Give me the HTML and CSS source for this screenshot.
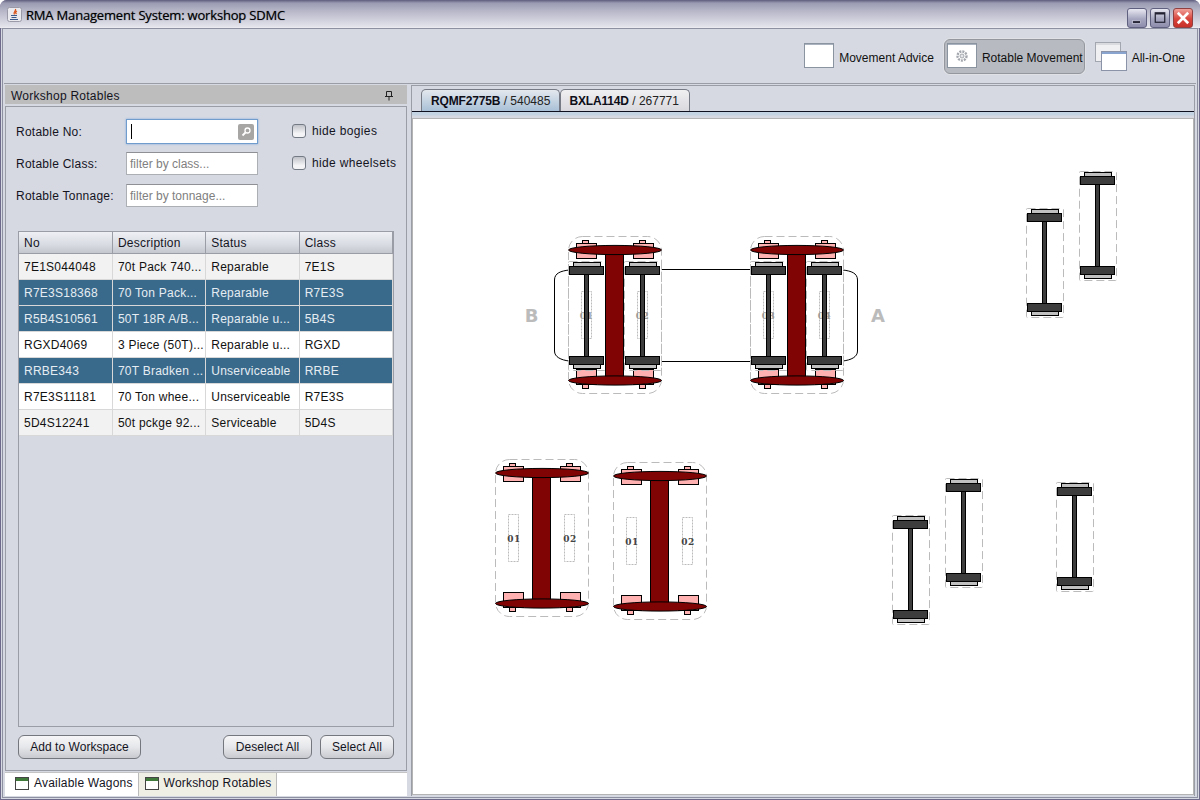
FILE: index.html
```html
<!DOCTYPE html>
<html lang="en">
<head>
<meta charset="utf-8">
<title>RMA Management System: workshop SDMC</title>
<link rel="stylesheet" href="styles.css">
</head>
<body>
<div class="window">
  <header class="titlebar">
    <svg class="app-icon" width="15" height="15" viewBox="0 0 15 15"><rect x="0.5" y="0.5" width="14" height="14" rx="2" fill="#e9e9ee" stroke="#9a9aa8"/><path d="M8.500 2c1 2-3 3-1 5.500M10 4c-2 1-1.500 2-.5 3" fill="none" stroke="#d8551c" stroke-width="1.300"/><path d="M4 8.500h6M4.500 10.500h5M3 12.500h8" stroke="#3a5a8c" stroke-width="1"/></svg>
    <span class="title">RMA Management System: workshop SDMC</span>
    <div class="win-buttons">
      <div class="win-btn"><svg width="19" height="20" viewBox="0 0 19 20"><rect x="5" y="13" width="8" height="2.500" fill="#223" stroke="#eef" stroke-width=".5"/></svg></div>
      <div class="win-btn"><svg width="19" height="20" viewBox="0 0 19 20"><rect x="4.500" y="4.500" width="10" height="10" fill="none" stroke="#223" stroke-width="1.300"/><path d="M4.500 5.500h10" stroke="#223" stroke-width="1.500"/></svg></div>
      <div class="win-btn win-close"><svg width="19" height="20" viewBox="0 0 19 20"><path d="M4 4.500l11 11M15 4.500l-11 11" stroke="#fff" stroke-width="2.800"/></svg></div>
    </div>
  </header>
  <div class="frame">
    <nav class="toolbar">
      <div class="tool">
        <svg class="tool-icon icon-up" width="30" height="25" viewBox="0 0 30 25"><rect x="0.500" y="0.500" width="29" height="24" fill="#fff" stroke="#8a93a0"/><path d="M1 1.500h28" stroke="#aab2c0"/></svg>
        <span>Movement Advice</span>
      </div>
      <div class="tool tool-active">
        <svg class="tool-icon icon-up" width="30" height="25" viewBox="0 0 30 25"><rect x="0.500" y="0.500" width="29" height="24" fill="#fff" stroke="#8a93a0"/><path d="M1 1.500h28" stroke="#aab2c0"/><circle cx="15" cy="13" r="4.500" fill="none" stroke="#a4a8ae" stroke-width="2.400" stroke-dasharray="2 1"/><circle cx="15" cy="13" r="2" fill="#e4e6ea" stroke="#a4a8ae"/></svg>
        <span>Rotable Movement</span>
      </div>
      <div class="tool">
        <svg class="tool-icon" width="32" height="29" viewBox="0 0 32 29"><rect x="0.500" y="0.500" width="25" height="19" fill="#f0f0f2" stroke="#a2a6ae"/><path d="M1 2h24" stroke="#c4c6cc"/><rect x="6.500" y="9.500" width="25" height="19" fill="#fff" stroke="#8a93a8"/><path d="M7 11h24" stroke="#8aa4d0" stroke-width="2"/></svg>
        <span>All-in-One</span>
      </div>
    </nav>
    <div class="main">
      <aside class="left">
        <div class="panel-head"><span>Workshop Rotables</span>
          <svg width="8" height="11" viewBox="0 0 8 11"><path d="M1.500 1.500h5v5h-5zM0 6.500h8M4 6.500v4" fill="none" stroke="#222"/></svg>
        </div>
        <div class="panel-body">
          <div class="form">
            <div class="form-col">
              <div class="form-row">
                <label class="lbl">Rotable No:</label>
                <div class="input input-focus"><i class="caret"></i>
                  <span class="search"><svg width="16" height="16" viewBox="0 0 16 16"><circle cx="9.500" cy="6.500" r="2.500" fill="none" stroke="#fff" stroke-width="1.300"/><path d="M7.500 8.500l-3 3" stroke="#fff" stroke-width="1.800"/></svg></span>
                </div>
              </div>
              <div class="form-row"><label class="lbl">Rotable Class:</label><div class="input">filter by class...</div></div>
              <div class="form-row"><label class="lbl">Rotable Tonnage:</label><div class="input">filter by tonnage...</div></div>
            </div>
            <div class="check-col">
              <div class="check-row"><i class="check"></i><span>hide bogies</span></div>
              <div class="check-row"><i class="check"></i><span>hide wheelsets</span></div>
            </div>
          </div>
          <div class="table-wrap">
            <table class="grid">
              <thead><tr><th>No</th><th>Description</th><th>Status</th><th>Class</th></tr></thead>
              <tbody>
                <tr class="alt"><td>7E1S044048</td><td>70t Pack 740...</td><td>Reparable</td><td>7E1S</td></tr>
                <tr class="sel"><td>R7E3S18368</td><td>70 Ton Pack...</td><td>Reparable</td><td>R7E3S</td></tr>
                <tr class="sel"><td>R5B4S10561</td><td>50T 18R A/B...</td><td>Reparable u...</td><td>5B4S</td></tr>
                <tr><td>RGXD4069</td><td>3 Piece (50T)...</td><td>Reparable u...</td><td>RGXD</td></tr>
                <tr class="sel"><td>RRBE343</td><td>70T Bradken ...</td><td>Unserviceable</td><td>RRBE</td></tr>
                <tr><td>R7E3S11181</td><td>70 Ton whee...</td><td>Unserviceable</td><td>R7E3S</td></tr>
                <tr class="alt"><td>5D4S12241</td><td>50t pckge 92...</td><td>Serviceable</td><td>5D4S</td></tr>
              </tbody>
            </table>
          </div>
          <div class="actions">
            <button class="btn btn-add">Add to Workspace</button>
            <button class="btn btn-desel">Deselect All</button>
            <button class="btn btn-sel">Select All</button>
          </div>
        </div>
        <div class="dock-tabs">
          <div class="dock-tab"><svg width="14" height="13" viewBox="0 0 14 13"><rect x=".5" y=".5" width="13" height="12" fill="#fff" stroke="#444"/><rect x="1" y="1" width="12" height="3" fill="#3f7a3a"/></svg><span>Available Wagons</span></div>
          <div class="dock-tab dock-tab-on"><svg width="14" height="13" viewBox="0 0 14 13"><rect x=".5" y=".5" width="13" height="12" fill="#fff" stroke="#444"/><rect x="1" y="1" width="12" height="3" fill="#3f7a3a"/></svg><span>Workshop Rotables</span></div>
        </div>
      </aside>
      <section class="right">
        <div class="tabs">
          <div class="tab tab-on"><b>RQMF2775B</b> / 540485</div>
          <div class="tab tab-next"><b>BXLA114D</b> / 267771</div>
        </div>
        <div class="tab-band">
          <div class="canvas">
            <svg class="diagram" width="780" height="674" viewBox="413 119 780 674">
              <defs>
                <g id="wheelset">
                  <rect x="0" y="0" width="37" height="109" rx="1" class="dash"/>
                  <rect x="5" y="1" width="27" height="4" class="grey"/>
                  <rect x="1" y="5" width="34" height="8" class="dark"/>
                  <rect x="16" y="13" width="4" height="82" class="dark"/>
                  <rect x="1" y="95" width="34" height="8" class="dark"/>
                  <rect x="5" y="103" width="27" height="4" class="grey"/>
                </g>
                <g id="frame">
                  <rect x="0" y="0" width="93" height="157" rx="14" class="dash"/>
                  <rect x="13" y="55" width="10" height="47" class="dots"/>
                  <rect x="69" y="55" width="10" height="47" class="dots"/>
                  <rect x="14" y="4" width="6" height="8" class="pink"/>
                  <rect x="71" y="4" width="6" height="8" class="pink"/>
                  <rect x="8" y="7" width="20" height="15" class="pink"/>
                  <rect x="65" y="7" width="20" height="15" class="pink"/>
                  <rect x="14" y="146" width="6" height="6" class="pink"/>
                  <rect x="71" y="146" width="6" height="6" class="pink"/>
                  <rect x="8" y="133" width="20" height="15" class="pink"/>
                  <rect x="65" y="133" width="20" height="15" class="pink"/>
                </g>
                <g id="beam">
                  <rect x="37" y="16" width="18" height="125" class="maroon"/>
                  <ellipse cx="46.500" cy="13.500" rx="46.500" ry="4.600" class="maroon"/>
                  <ellipse cx="46.500" cy="144" rx="46.500" ry="4.600" class="maroon"/>
                </g>
              </defs>
              <path class="wagon" d="M569 270C561 271 554.500 273 554.500 280V351C554.500 357 561 360 569 361M661 269.500H751M661 361.500H751M843 270C851 271 857.500 273 857.500 280V351C857.500 357 851 360 843 361"/>
              <text x="531.500" y="322" class="end">B</text>
              <text x="878" y="322" class="end">A</text>
              <use href="#frame" x="568.500" y="236.500"/>
              <use href="#frame" x="750.500" y="236.500"/>
              <text x="586.500" y="319" class="num num-faint">01</text>
              <text x="642.500" y="319" class="num num-faint">02</text>
              <text x="768.500" y="319" class="num num-faint">03</text>
              <text x="824.500" y="319" class="num num-faint">04</text>
              <use href="#wheelset" x="568.500" y="261.500"/>
              <use href="#wheelset" x="624.500" y="261.500"/>
              <use href="#wheelset" x="750.500" y="261.500"/>
              <use href="#wheelset" x="806.500" y="261.500"/>
              <use href="#beam" x="568.500" y="236.500"/>
              <use href="#beam" x="750.500" y="236.500"/>
              <use href="#frame" x="495.500" y="459.500"/>
              <use href="#beam" x="495.500" y="459.500"/>
              <text x="514" y="542" class="num">01</text>
              <text x="570" y="542" class="num">02</text>
              <use href="#frame" x="613.500" y="462.500"/>
              <use href="#beam" x="613.500" y="462.500"/>
              <text x="632" y="545" class="num">01</text>
              <text x="688" y="545" class="num">02</text>
              <use href="#wheelset" x="1026.500" y="208.500"/>
              <use href="#wheelset" x="1079.500" y="171.500"/>
              <use href="#wheelset" x="892.500" y="515.500"/>
              <use href="#wheelset" x="945.500" y="478.500"/>
              <use href="#wheelset" x="1056.500" y="482.500"/>
            </svg>
          </div>
        </div>
      </section>
    </div>
  </div>
</div>
</body>
</html>
```
FILE: styles.css
```css
html, body { margin: 0; padding: 0; background: #fff; }
body { width: 1200px; height: 800px; overflow: hidden; font: 12px "Liberation Sans", Arial, sans-serif; color: #111; }
.window { box-sizing: border-box; width: 1200px; height: 800px; display: flex; flex-direction: column; border-radius: 7px 7px 0 0; background: #6d6a8c; overflow: hidden; }
.titlebar { height: 28px; flex: none; display: flex; align-items: center; padding: 1px 7px 0 7px; box-sizing: border-box; background: linear-gradient(#5d5d7c 0, #9a9ab2 3px, #b4b4c6 10px, #e4e4ec 27px, #f0f0f4 28px); }
.app-icon { flex: none; }
.title { margin-left: 4px; font: 13px "Open Sans", sans-serif; letter-spacing: -.18px; color: #000; text-shadow: 0 0 1px #556; }
.win-buttons { margin-left: auto; display: flex; gap: 3px; padding-top: 6px; }
.win-btn { width: 20px; height: 20px; border-radius: 3px; border: 1px solid #5f5f80; box-sizing: border-box; background: linear-gradient(#e8e8f2, #a6a6c0 55%, #8e8eac); display: flex; align-items: center; justify-content: center; overflow: hidden; }
.win-close { background: linear-gradient(#f0a09a, #d8453c 55%, #c83028); border-color: #904040; }
.frame { flex: 1; min-height: 0; display: flex; flex-direction: column; background: #d6d9e2; margin: 0 1px 1px; padding: 0 2px 2px; border: 1px solid #d6d9e2; border-top: 1px solid #8d90a0; box-shadow: inset 1px 0 0 #8d90a0, inset -1px 0 0 #8d90a0, inset 0 -1px 0 #8d90a0; }
.toolbar { height: 54px; flex: none; display: flex; justify-content: flex-end; align-items: center; gap: 10px; padding: 0 11px 0 0; border-bottom: 1px solid #9a9da6; }
.tool { height: 35px; display: flex; align-items: center; gap: 5px; box-sizing: border-box; color: #111; white-space: nowrap; }
.tool span { margin-top: 4px; }
.tool-icon { flex: none; }
.icon-up { margin-bottom: 2px; }
.tool-active { background: #b7bac0; border: 1px solid #94979e; border-radius: 6px; padding: 0 1px 0 2px; box-shadow: 0 0 0 1px #dfe1e6; }
.main { flex: 1; min-height: 0; display: flex; gap: 4px; padding-top: 1px; }
.left { width: 402px; flex: none; margin-left: 1px; display: flex; flex-direction: column; }
.panel-head { height: 19px; flex: none; box-sizing: border-box; padding: 2px 14px 0 6px; background: #bdbdbd; display: flex; align-items: center; justify-content: space-between; margin-bottom: 2px; color: #14141e; letter-spacing: .25px; }
.panel-body { flex: 1; min-height: 0; box-sizing: border-box; border: 1px solid #9a9da6; display: flex; flex-direction: column; padding: 13px 12px 11px; }
.form { height: 111px; flex: none; display: flex; }
.form-col { width: 250px; flex: none; display: flex; flex-direction: column; gap: 9px; }
.form-row { display: flex; align-items: center; height: 23px; }
.lbl { width: 110px; flex: none; color: #14141e; margin-left: -2px; letter-spacing: .25px; }
.input { width: 132px; height: 23px; box-sizing: border-box; background: #fff; border: 1px solid #acafb4; border-top-color: #8e9096; color: #808080; padding-left: 3px; line-height: 23px; position: relative; }
.input-focus { height: 25px; margin-top: -1px; border: 1px solid #6f9ccc; box-shadow: 0 0 2px #7fa8d8; }
.caret { display: block; position: absolute; left: 4px; top: 4px; width: 1px; height: 15px; background: #000; }
.search { position: absolute; right: 3px; top: 4px; width: 16px; height: 16px; background: #a8a6a4; border-radius: 2px; }
.search svg { display: block; }
.check-col { margin-left: 24px; display: flex; flex-direction: column; gap: 10px; }
.check-row { display: flex; align-items: center; height: 22px; gap: 6px; white-space: nowrap; color: #14141e; letter-spacing: .35px; }
.check { width: 14px; height: 14px; box-sizing: border-box; border: 1px solid #747a84; border-radius: 3px; background: linear-gradient(#bfc2c8, #f4f4f6 70%); display: block; }
.table-wrap { flex: 1; min-height: 0; border: 1px solid #9a9da6; }
.grid { width: 374px; table-layout: fixed; border-collapse: collapse; letter-spacing: .25px; }
.grid th { height: 21px; padding: 0 0 0 5px; text-align: left; font-weight: normal; color: #14141e; background: linear-gradient(#eef0f4, #d8dbe2 60%, #c4c7ce); border-right: 1px solid #9a9da6; border-bottom: 1px solid #9a9da6; }
.grid td { height: 25px; padding: 0 0 0 5px; background: #fff; color: #111; border-right: 1px solid #d8d8d8; border-bottom: 1px solid #d8d8d8; white-space: nowrap; overflow: hidden; }
.grid .alt td { background: #f2f2f2; }
.grid .sel td { background: #396a8c; color: #e6edf2; }
.actions { height: 24px; flex: none; display: flex; margin-top: 8px; gap: 8px; }
.btn { height: 24px; padding: 0; box-sizing: border-box; border: 1px solid #75777e; border-radius: 6px; font: 12px "Liberation Sans", Arial, sans-serif; letter-spacing: .05px; color: #14141e; background: linear-gradient(#f6f6f8, #e6e7ea 50%, #c8cad0); }
.btn-add { width: 123px; margin-right: auto; }
.btn-desel { width: 89px; }
.btn-sel { width: 74px; }
.dock-tabs { height: 24px; flex: none; margin-top: 1px; background: #fff; border-top: 1px solid #c4c4c4; display: flex; box-sizing: border-box; letter-spacing: .2px; }
.dock-tab { display: flex; align-items: center; gap: 5px; box-sizing: border-box; padding: 0 5px 3px 10px; height: 23px; background: #fff; color: #14141e; border-right: 1px solid #bbb; white-space: nowrap; }
.dock-tab-on { background: #f0efe6; padding: 0 4px 3px 6px; }
.right { flex: 1; min-width: 0; display: flex; flex-direction: column; border: 1px solid #9a9da6; border-bottom: 0; margin-right: 1px; }
.tabs { height: 26px; flex: none; box-sizing: border-box; display: flex; align-items: flex-end; padding-left: 9px; border-bottom: 1px solid #0e1020; }
.tab { height: 22px; box-sizing: border-box; padding: 0 9px; display: flex; align-items: center; white-space: pre; border: 1px solid #767a84; border-bottom: 0; border-radius: 5px 5px 0 0; background: linear-gradient(#f0f0f2, #d8d8de); color: #222; }
.tab b { color: #0e0e18; letter-spacing: -.15px; }
.tab-on { background: linear-gradient(#e4e8ee, #a8c0d6); }
.tab-next { padding: 0 10px 0 8px; }
.tab-band { flex: 1; min-height: 0; background: linear-gradient(#c4d4e2 3px, #d6d9e2 4px); padding: 7px 1px 2px; }
.canvas { width: 780px; height: 100%; box-sizing: border-box; background: #fff; box-shadow: 0 0 0 1px #b4b4b4; overflow: hidden; }
.diagram { display: block; }
.dash { fill: none; stroke: #bbb; stroke-width: 1; stroke-dasharray: 8 4; }
.dots { fill: none; stroke: #bbb; stroke-width: 1; stroke-dasharray: 2 1; }
.grey { fill: #c0c0c0; stroke: #000; stroke-width: 1; }
.dark { fill: #3d3d3d; stroke: #000; stroke-width: 1; }
.pink { fill: #ffb0b0; stroke: #000; stroke-width: 1; }
.maroon { fill: #800404; stroke: #000; stroke-width: 1; }
.wagon { fill: none; stroke: #000; stroke-width: 1; }
.end { font: bold 18px "DejaVu Sans", sans-serif; fill: #bbb; text-anchor: middle; }
.num { font: bold 9px "DejaVu Serif", serif; fill: #444; text-anchor: middle; letter-spacing: .5px; }
.num-faint { fill: #999; }
```
